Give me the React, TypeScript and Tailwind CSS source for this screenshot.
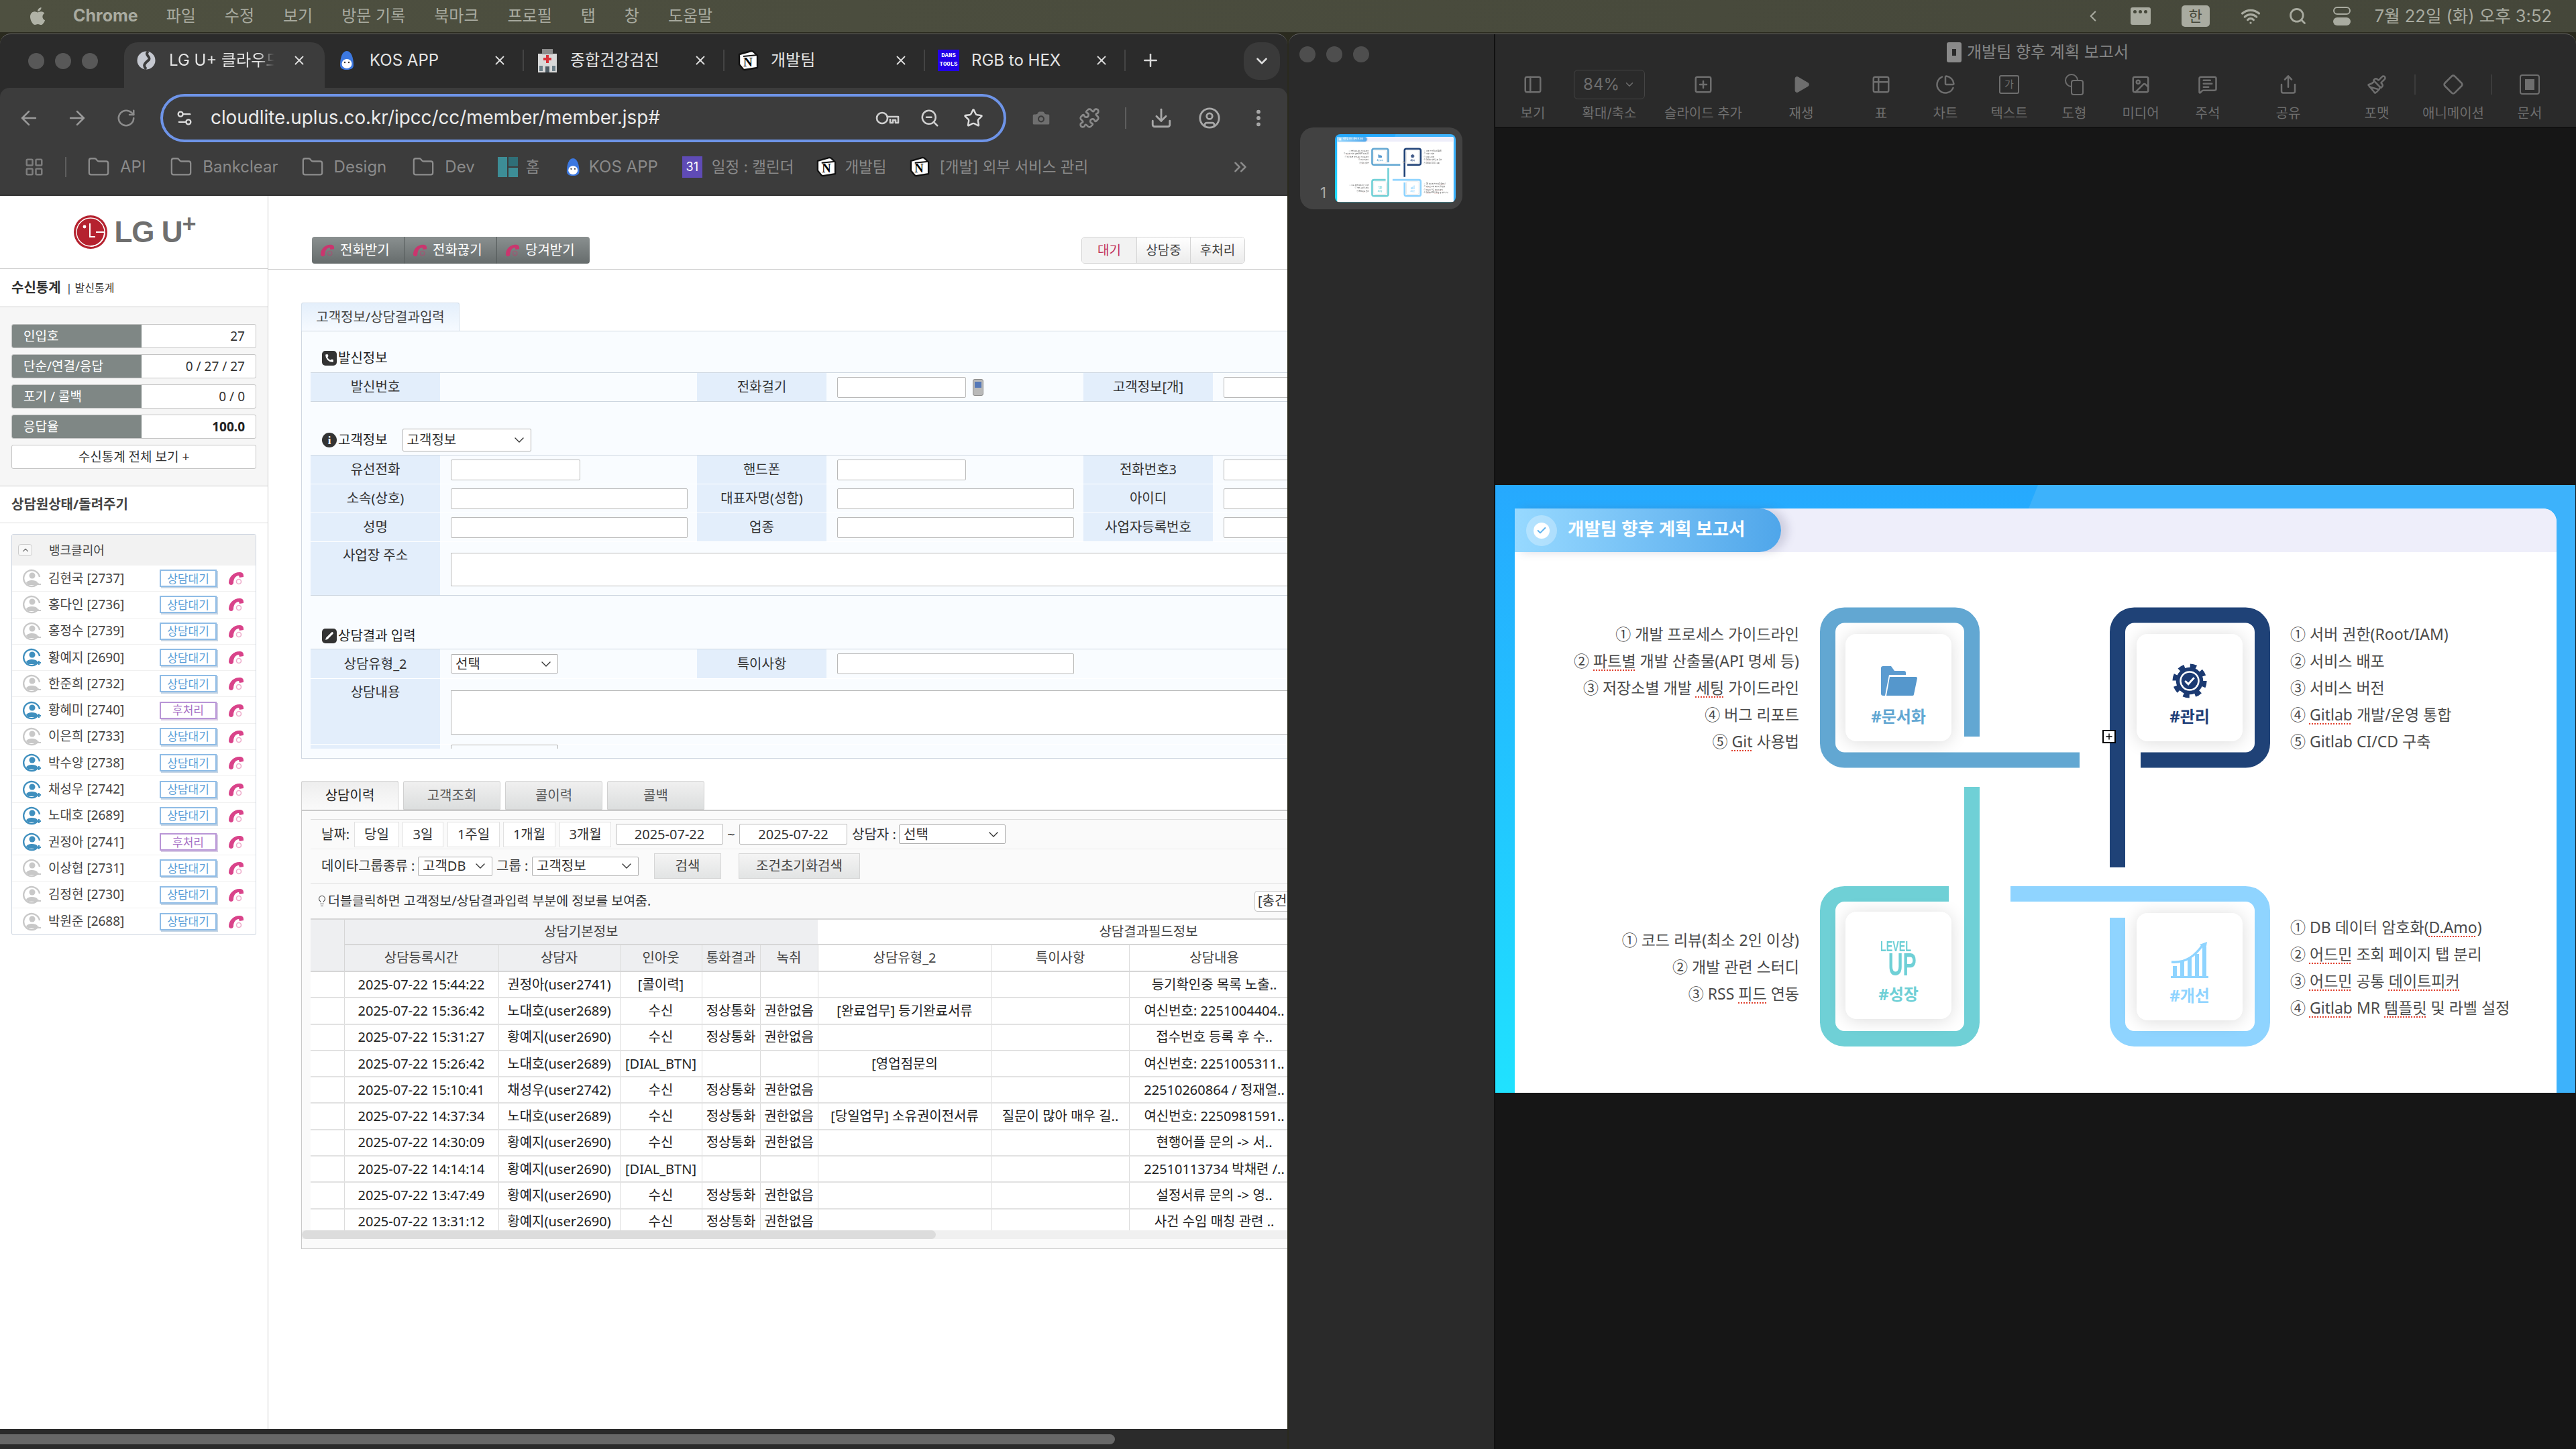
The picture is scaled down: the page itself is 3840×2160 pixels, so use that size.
import React from 'react';
import {
  ArrowLeft, ArrowRight, RotateCw, Settings2, ZoomOut, Star, Camera, Puzzle, Download, CircleUser,
  EllipsisVertical, ChevronDown, ChevronUp, Plus, X, LayoutGrid, Folder, ChevronsRight, ChevronLeft, Wifi, Search,
  PanelLeft, SquarePlus, Play, Table2, ChartPie, Image, MessageSquareText, Share, Paintbrush, Diamond, Lightbulb, Check,
  Phone, Pencil,
} from 'lucide-react';
import { FaApple } from 'react-icons/fa';

const PinkPhone = ({ size = 24, color = '#d9438a' }: { size?: number; color?: string }) => (
  <svg viewBox="0 0 24 24" width={size} height={size}>
    <path d="M1 19C1 10 8 3 17 3c3 0 6 1 6 5v2l-6 1-1-3c-5 0-8 5-8 11-1 4-6 4-7 0z" fill={color} />
    <circle cx="16" cy="17" r="3.5" fill="none" stroke={color} strokeOpacity="0.45" strokeWidth="1.6" />
  </svg>
);

const Avatar = ({ online }: { online: boolean }) => {
  const c = online ? '#3f8fbe' : '#c8c8c8';
  return (
    <svg viewBox="0 0 28 28" width="28" height="28" className="shrink-0">
      <path d="M23 21A12 12 0 1 1 25 12" fill="none" stroke={c} strokeWidth="2.4" />
      <circle cx="14" cy="10" r="4.5" fill={c} />
      <path d="M5 21c2-5 14-5 17-1l-2 4H8z" fill={c} />
      {online ? <path d="M21 22h6M24 19v6" stroke={c} strokeWidth="2" /> : <path d="M20 23h7" stroke={c} strokeWidth="2" />}
    </svg>
  );
};

const Notion = ({ size = 32 }: { size?: number }) => (
  <div className="relative flex shrink-0 items-center justify-center" style={{ width: size, height: size }}>
    <svg viewBox="0 0 32 32" width={size} height={size} className="absolute left-0 top-0">
      <path d="M3 7 21 2q2 0 4 2l5 5v18l-19 3q-2 0-3-2l-5-6z" fill="#fff" stroke="#111" strokeWidth="2.4" strokeLinejoin="round" />
      <path d="M9 10 30 8" stroke="#111" strokeWidth="2" />
    </svg>
    <span className="relative mt-[5px] font-['Liberation_Serif',serif] font-bold leading-none text-black" style={{ fontSize: size * 0.6 }}>N</span>
  </div>
);

const KosIcon = ({ size = 30 }: { size?: number }) => (
  <svg viewBox="0 0 24 30" width={size * 0.8} height={size} className="shrink-0">
    <path d="M12 1C5 1 2 12 2 22c0 5 4 7 10 7s10-2 10-7C22 12 19 1 12 1z" fill="#3c78e0" />
    <ellipse cx="12" cy="20" rx="7.5" ry="7" fill="#fff" />
    <circle cx="9" cy="18" r="1.2" fill="#333" />
    <circle cx="15" cy="18" r="1.2" fill="#333" />
  </svg>
);

const Hospital = () => (
  <svg viewBox="0 0 30 36" width="30" height="36" className="shrink-0">
    <rect x="1" y="8" width="28" height="28" fill="#d9d9d9" />
    <rect x="7" y="1" width="16" height="8" fill="#8c8c8c" />
    <path d="M15 10v12M9 16h12" stroke="#d8323a" strokeWidth="4" />
    <rect x="3" y="26" width="5" height="8" fill="#6d7f88" />
    <rect x="22" y="26" width="5" height="8" fill="#6d7f88" />
    <rect x="12" y="27" width="6" height="9" fill="#4e5a62" />
  </svg>
);

const PassKey = () => (
  <svg viewBox="0 0 36 26" width="36" height="26" fill="none" stroke="#cfcfcf" strokeWidth="2.6">
    <circle cx="10" cy="13" r="8" />
    <path d="M18 11h16v9h-4v-4h-4v4h-4v-6" strokeLinejoin="round" />
  </svg>
);

const Tab = ({ icon, title, active, sep, titleClass }: { icon: React.ReactNode; title: string; active?: boolean; sep?: boolean; titleClass?: string }) => (
  <div className={`flex h-[68px] w-[299px] shrink-0 items-center self-end pb-[14px] pl-[17px] pr-[2px] ${active ? 'rounded-t-[20px] bg-[#3c3c3c]' : ''}`}>
    <div className="flex w-[32px] shrink-0 justify-center">{icon}</div>
    <span className={`ml-[18px] min-w-0 flex-1 overflow-hidden whitespace-nowrap text-[24px] text-[#e4e4e4] ${titleClass ?? ''}`}>{title}</span>
    <X size={22} strokeWidth={2} className="shrink-0 text-[#dedede]" />
    <div className={`ml-[23px] h-[32px] w-[2px] shrink-0 ${sep ? 'bg-[#444444]' : ''}`} />
  </div>
);

const BookFolder = ({ label }: { label: string }) => (
  <div className="flex items-center gap-[15px]">
    <Folder size={34} strokeWidth={1.6} className="text-[#8c8c8c]" />
    <span>{label}</span>
  </div>
);

const ChromeWindow = () => (
  <div className="flex h-full w-[1919px] shrink-0 flex-col overflow-hidden rounded-t-[16px] border-t border-t-[#6a6a6a] bg-[#2b2b2b] font-['Inter','Noto_Sans_CJK_KR',sans-serif]">
    {/* tab strip */}
    <div className="flex h-[80px] shrink-0 items-end pr-[11px]">
      <div className="flex h-[80px] w-[185px] shrink-0 items-center gap-[16px] pl-[42px]">
        <div className="h-[24px] w-[24px] rounded-full bg-[#585858]" />
        <div className="h-[24px] w-[24px] rounded-full bg-[#585858]" />
        <div className="h-[24px] w-[24px] rounded-full bg-[#585858]" />
      </div>
      <Tab active title="LG U+ 클라우드" titleClass="[mask-image:linear-gradient(to_right,black_85%,transparent)] max-w-[158px] mr-[26px]" icon={
        <svg viewBox="0 0 28 28" width="28" height="28">
          <circle cx="14" cy="14" r="13.5" fill="#c5c8d0" />
          <path d="M17 1c-7 5 6 8 0 13s-8 8-3 13" fill="none" stroke="#3c3c3c" strokeWidth="4" />
        </svg>
      } />
      <Tab sep title="KOS APP" icon={<KosIcon />} />
      <Tab sep title="종합건강검진" icon={<Hospital />} />
      <Tab sep title="개발팀" icon={<Notion />} />
      <Tab sep title="RGB to HEX" icon={
        <div className="flex h-[32px] w-[32px] flex-col items-center justify-center bg-[#2300e8] font-['Liberation_Mono',monospace] text-[9px] font-bold leading-[13px] text-white">
          <span>DANS</span><span>TOOLS</span>
        </div>
      } />
      <Plus size={30} strokeWidth={2} className="mb-[26px] ml-[20px] text-[#d8d8d8]" />
      <div className="mb-[12px] ml-auto flex h-[56px] w-[54px] items-center justify-center rounded-[22px] bg-[#3a3a3a]">
        <ChevronDown size={26} strokeWidth={2.4} className="text-[#dedede]" />
      </div>
    </div>
    {/* toolbar */}
    <div className="flex h-[82px] shrink-0 items-center rounded-tl-[14px] rounded-tr-[14px] bg-[#3c3c3c] pl-[26px] pt-[8px]">
      <ArrowLeft size={34} strokeWidth={1.8} className="text-[#9a9a9a]" />
      <ArrowRight size={34} strokeWidth={1.8} className="ml-[38px] text-[#9a9a9a]" />
      <RotateCw size={30} strokeWidth={2} className="ml-[41px] text-[#8c8c8c]" />
      <div className="ml-[36px] flex h-[72px] w-[1261px] items-center rounded-full border-[4px] border-[#6e94e8] pl-[18px] pr-[30px]">
        <Settings2 size={28} strokeWidth={2} className="text-[#dcdcdc]" />
        <span className="ml-[25px] whitespace-nowrap text-[27.8px] text-[#ebebeb]">cloudlite.uplus.co.kr/ipcc/cc/member/member.jsp#</span>
        <div className="ml-auto"><PassKey /></div>
        <ZoomOut size={30} strokeWidth={2} className="ml-[30px] text-[#cfcfcf]" />
        <Star size={30} strokeWidth={2} className="ml-[35px] text-[#dcdcdc]" />
      </div>
      <Camera size={32} fill="#6f6f6f" strokeWidth={1.6} className="ml-[36px] text-[#3c3c3c]" />
      <Puzzle size={32} strokeWidth={2} className="ml-[40px] text-[#8a8a8a]" />
      <div className="ml-[37px] h-[32px] w-[2px] bg-[#5e5e5e]" />
      <Download size={34} strokeWidth={2} className="ml-[35px] text-[#a8a8a8]" />
      <CircleUser size={34} strokeWidth={2} className="ml-[38px] text-[#a8a8a8]" />
      <EllipsisVertical size={32} strokeWidth={2.4} className="ml-[40px] text-[#a8a8a8]" />
    </div>
    {/* bookmarks */}
    <div className="flex h-[77px] shrink-0 items-center bg-[#3c3c3c] pb-[6px] pl-[36px] text-[24px] text-[#8a8a8a]">
      <LayoutGrid size={30} strokeWidth={2} className="text-[#7d7d7d]" />
      <div className="ml-[31px] mr-[31px] h-[30px] w-[2px] bg-[#5e5e5e]" />
      <BookFolder label="API" />
      <div className="ml-[36px]"><BookFolder label="Bankclear" /></div>
      <div className="ml-[34px]"><BookFolder label="Design" /></div>
      <div className="ml-[38px]"><BookFolder label="Dev" /></div>
      <div className="ml-[34px] grid h-[30px] w-[30px] grid-cols-2 gap-[2px]"><div className="row-span-2 bg-[#3d8d96]" /><div className="bg-[#2f6f78]" /><div className="bg-[#3d8d96]" /></div>
      <span className="ml-[12px] text-[22.5px]">홈</span>
      <div className="ml-[39px]"><KosIcon size={28} /></div>
      <span className="ml-[12px]">KOS APP</span>
      <div className="ml-[36px] flex h-[32px] w-[30px] items-center justify-center bg-[#5f4bb6] text-[18px] text-white">31</div>
      <span className="ml-[14px] text-[22.5px]">일정 : 캘린더</span>
      <div className="ml-[33px]"><Notion size={31} /></div>
      <span className="ml-[12px] text-[22.5px]">개발팀</span>
      <div className="ml-[33px]"><Notion size={31} /></div>
      <span className="ml-[15px] text-[22.5px]">[개발] 외부 서비스 관리</span>
      <ChevronsRight size={30} strokeWidth={2} className="ml-auto mr-[55px] text-[#8a8a8a]" />
    </div>
    <div className="h-[2px] shrink-0 bg-[#333]" />
    <div className="flex min-h-0 flex-1 bg-white font-['Noto_Sans','Noto_Sans_CJK_KR',sans-serif] text-[20px] leading-none text-[#333]">
      <Sidebar />
      <MainArea />
    </div>
    <div className="flex h-[30px] shrink-0 items-center bg-[#2b2b2b]">
      <div className="h-[15px] w-[1662px] rounded-r-full bg-[#686868]" />
    </div>
  </div>
);

const statRows = [
  { label: '인입호', value: '27' },
  { label: '단순/연결/응답', value: '0 / 27 / 27' },
  { label: '포기 / 콜백', value: '0 / 0' },
  { label: '응답율', value: '100.0', bold: true },
];

const agents = [
  { name: '김현국 [2737]', on: false, state: '상담대기' },
  { name: '홍다인 [2736]', on: false, state: '상담대기' },
  { name: '홍정수 [2739]', on: false, state: '상담대기' },
  { name: '황예지 [2690]', on: true, state: '상담대기' },
  { name: '한준희 [2732]', on: false, state: '상담대기' },
  { name: '황혜미 [2740]', on: true, state: '후처리' },
  { name: '이은희 [2733]', on: false, state: '상담대기' },
  { name: '박수양 [2738]', on: true, state: '상담대기' },
  { name: '채성우 [2742]', on: true, state: '상담대기' },
  { name: '노대호 [2689]', on: true, state: '상담대기' },
  { name: '권정아 [2741]', on: true, state: '후처리' },
  { name: '이상협 [2731]', on: false, state: '상담대기' },
  { name: '김정현 [2730]', on: false, state: '상담대기' },
  { name: '박원준 [2688]', on: false, state: '상담대기' },
];

const Sidebar = () => (
  <div className="w-[400px] shrink-0 border-r border-r-[#cccccc]">
    <div className="flex h-[109px] items-center justify-center gap-[10px] border-b border-b-[#cccccc] pl-[4px]">
      <svg viewBox="0 0 50 50" width="50" height="50">
        <circle cx="25" cy="25" r="25" fill="#b5222f" />
        <circle cx="25" cy="25" r="21" fill="none" stroke="#fff" strokeWidth="1.4" />
        <circle cx="16" cy="17" r="2.4" fill="#fff" />
        <path d="M24 12v20h8M46 25H33M25 46a21 21 0 0 0 21-21" fill="none" stroke="#fff" strokeWidth="2" />
      </svg>
      <div className="flex items-start font-['Liberation_Sans',sans-serif] font-bold leading-none text-[#6f6f6f]">
        <span className="text-[44px] tracking-[-1px]">LG U</span>
        <span className="-mt-[8px] text-[36px]">+</span>
      </div>
    </div>
    <div className="flex h-[57px] items-center border-b border-b-[#cccccc] pl-[17px]">
      <span className="text-[20px] font-bold text-[#333]">수신통계</span>
      <span className="ml-[8px] text-[16px] text-[#333]">| 발신통계</span>
    </div>
    <div className="flex h-[267px] flex-col gap-[9px] border-b border-b-[#cccccc] bg-[#f6f6f6] px-[17px] pt-[25px]">
      {statRows.map(r => (
        <div key={r.label} className="flex h-[36px] shrink-0 overflow-hidden rounded-[3px] border border-[#c4c4c4] bg-white">
          <div className="flex w-[193px] items-center bg-[#7f8785] pl-[17px] text-[19px] text-white">{r.label}</div>
          <div className={`flex flex-1 items-center justify-end pr-[16px] text-[19px] ${r.bold ? 'font-bold text-[#222]' : 'text-[#333]'}`}>{r.value}</div>
        </div>
      ))}
      <div className="flex h-[36px] shrink-0 items-center justify-center rounded-[3px] border border-[#c4c4c4] bg-white text-[19px] text-[#333]">수신통계 전체 보기 +</div>
    </div>
    <div className="flex h-[55px] items-center border-b border-b-[#dddddd] pl-[17px] text-[20px] font-bold text-[#444]">상담원상태/돌려주기</div>
    <div className="mx-[17px] mt-[16px] overflow-hidden rounded-[3px] border border-[#cdd5e0]">
      <div className="flex h-[46px] items-center bg-[#f2f2f2] pl-[9px] text-[18px] text-[#444]">
        <div className="flex h-[18px] w-[21px] items-center justify-center rounded-[4px] border border-[#cccccc] bg-[#f8f8f8]">
          <ChevronUp size={14} className="text-[#777]" />
        </div>
        <span className="ml-[25px]">뱅크클리어</span>
      </div>
      {agents.map(a => (
        <div key={a.name} className="flex h-[39.3px] items-center border-b border-b-[#f0f0f0] pl-[16px] last:border-b-0">
          <Avatar online={a.on} />
          <span className="ml-[10px] w-[166px] whitespace-nowrap text-[19px] text-[#444]">{a.name}</span>
          <div className={`flex h-[26px] w-[85px] items-center justify-center border-2 bg-white text-[17px] ${a.state === '후처리' ? 'border-[#b895d6] text-[#a56fc5] shadow-[2px_2px_0_#d8cbe4]' : 'border-[#8fbce6] text-[#5b9fd8] shadow-[2px_2px_0_#c5d5e5]'}`}>{a.state}</div>
          <div className="ml-[17px]"><PinkPhone /></div>
        </div>
      ))}
    </div>
  </div>
);

const inp = 'h-[31px] shrink-0 rounded-[2px] border border-[#b9b9b9] bg-white';

const Label = ({ text, tall }: { text: string; tall?: boolean }) => (
  <div className={`flex w-[193px] shrink-0 justify-center bg-[#e3eefb] text-[20px] text-[#333] ${tall ? 'items-start pt-[10px]' : 'items-center'}`}>{text}</div>
);

const Field = ({ label, w, children }: { label: string; w?: string; children?: React.ReactNode }) => (
  <div className="flex w-[576px] shrink-0">
    <Label text={label} />
    <div className="flex flex-1 items-center pl-[16px]">{children ?? (w ? <div className={`${inp} ${w}`} /> : null)}</div>
  </div>
);

const Sel = ({ text, className }: { text: string; className: string }) => (
  <div className={`flex shrink-0 items-center justify-between rounded-[2px] border border-[#b0b0b0] bg-white pl-[6px] pr-[5px] text-[20px] text-[#333] ${className}`}>
    <span>{text}</span>
    <ChevronDown size={24} strokeWidth={1.4} className="text-[#333]" />
  </div>
);

const Heading = ({ icon, text, round }: { icon: React.ReactNode; text: string; round?: boolean }) => (
  <div className="flex items-center gap-[2px] text-[20px] text-[#222]">
    <div className={`flex h-[22px] w-[22px] items-center justify-center bg-[#333] ${round ? 'rounded-full' : 'rounded-[5px]'}`}>{icon}</div>
    <span>{text}</span>
  </div>
);

const FormPanel = () => (
  <div className="h-[638px] w-[1800px] border-b border-l border-t border-[#d0d8e2] bg-[#f9fcff] px-[13px]">
    <div className="flex h-[61px] items-end pb-[10px] pl-[17px]">
      <Heading icon={<Phone size={14} fill="#fff" strokeWidth={0} />} text="발신정보" />
    </div>
    <div className="flex h-[44px] border-b border-t border-[#cdd6e0]">
      <Field label="발신번호" />
      <Field label="전화걸기">
        <div className={`${inp} w-[192px]`} />
        <div className="ml-[10px] flex h-[25px] w-[16px] flex-col items-center rounded-[3px] border border-[#8a8a8a] bg-[#b9b9b9] pt-[3px]">
          <div className="h-[9px] w-[10px] bg-[#5578b8]" />
        </div>
      </Field>
      <Field label="고객정보[개]" w="w-[192px]" />
    </div>
    <div className="flex h-[79px] items-end pb-[5px] pl-[17px]">
      <div className="flex h-[34px] items-center gap-[22px]">
        <Heading round icon={<span className="font-['Liberation_Serif',serif] text-[17px] font-bold leading-none text-white">i</span>} text="고객정보" />
        <Sel text="고객정보" className="h-[34px] w-[192px]" />
      </div>
    </div>
    <div className="border-b border-t border-[#cdd6e0]">
      <div className="flex h-[43px] border-b border-white">
        <Field label="유선전화" w="w-[193px]" /><Field label="핸드폰" w="w-[192px]" /><Field label="전화번호3" w="w-[192px]" />
      </div>
      <div className="flex h-[43px] border-b border-white">
        <Field label="소속(상호)" w="w-[353px]" /><Field label="대표자명(성함)" w="w-[353px]" /><Field label="아이디" w="w-[192px]" />
      </div>
      <div className="flex h-[43px] border-b border-white">
        <Field label="성명" w="w-[353px]" /><Field label="업종" w="w-[353px]" /><Field label="사업자등록번호" w="w-[192px]" />
      </div>
      <div className="flex h-[79px]">
        <Label text="사업장 주소" tall />
        <div className="flex-1 pl-[16px] pt-[16px]"><div className="h-[50px] w-full border border-[#b9b9b9] bg-white" /></div>
      </div>
    </div>
    <div className="flex h-[79px] items-end pb-[8px] pl-[17px]">
      <Heading icon={<Pencil size={14} fill="#fff" strokeWidth={0} />} text="상담결과 입력" />
    </div>
    <div className="h-[149px] overflow-hidden border-t border-[#cdd6e0]">
      <div className="flex h-[44px] border-b border-white">
        <Field label="상담유형_2"><Sel text="선택" className="h-[29px] w-[160px]" /></Field>
        <Field label="특이사항" w="w-[353px]" />
      </div>
      <div className="flex h-[98px] border-b border-white">
        <Label text="상담내용" tall />
        <div className="flex-1 pl-[16px] pt-[17px]"><div className="h-[66px] w-full border border-[#b9b9b9] bg-white" /></div>
      </div>
      <div className="flex h-[20px]">
        <Label text="" />
        <div className="pl-[16px]"><div className="h-[20px] w-[160px] rounded-[2px] border border-[#b0b0b0]" /></div>
      </div>
    </div>
  </div>
);

const dateBtn = 'flex h-[38px] shrink-0 items-center justify-center border border-[#e2e2e2] bg-white';
const grayBtn = 'flex h-[38px] shrink-0 items-center justify-center border border-[#d6d6d6] bg-gradient-to-b from-[#f4f4f4] to-[#e2e4e4] text-[#444]';

const historyRows = [
  ['2025-07-22 15:44:22', '권정아(user2741)', '[콜이력]', '', '', '', '', '등기확인중 목록 노출..', ''],
  ['2025-07-22 15:36:42', '노대호(user2689)', '수신', '정상통화', '권한없음', '[완료업무] 등기완료서류', '', '여신번호: 2251004404..', ''],
  ['2025-07-22 15:31:27', '황예지(user2690)', '수신', '정상통화', '권한없음', '', '', '접수번호 등록 후 수..', ''],
  ['2025-07-22 15:26:42', '노대호(user2689)', '[DIAL_BTN]', '', '', '[영업점문의', '', '여신번호: 2251005311..', ''],
  ['2025-07-22 15:10:41', '채성우(user2742)', '수신', '정상통화', '권한없음', '', '', '22510260864 / 정재열..', ''],
  ['2025-07-22 14:37:34', '노대호(user2689)', '수신', '정상통화', '권한없음', '[당일업무] 소유권이전서류', '질문이 많아 매우 길..', '여신번호: 2250981591..', ''],
  ['2025-07-22 14:30:09', '황예지(user2690)', '수신', '정상통화', '권한없음', '', '', '현행어플 문의 -> 서..', ''],
  ['2025-07-22 14:14:14', '황예지(user2690)', '[DIAL_BTN]', '', '', '', '', '22510113734 박채련 /..', ''],
  ['2025-07-22 13:47:49', '황예지(user2690)', '수신', '정상통화', '권한없음', '', '', '설정서류 문의 -> 영..', ''],
  ['2025-07-22 13:31:12', '황예지(user2690)', '수신', '정상통화', '권한없음', '', '', '사건 수임 매칭 관련 ..', ''],
];

const HistoryTable = () => (
  <div className="h-[478px] overflow-hidden">
    <table className="w-[1742px] table-fixed border-collapse text-[20px] text-[#222]">
      <colgroup>
        <col className="w-[50px]" /><col className="w-[230px]" /><col className="w-[181px]" /><col className="w-[122px]" />
        <col className="w-[87px]" /><col className="w-[86px]" /><col className="w-[259px]" /><col className="w-[205px]" /><col className="w-[254px]" /><col className="w-[268px]" />
      </colgroup>
      <thead>
        <tr className="h-[38px] border-t-2 border-t-[#d6d6d6] text-[#444]">
          <th rowSpan={2} className="border-b-2 border-r border-[#d6d6d6] bg-[#eeeff1]" />
          <th colSpan={5} className="border-b-2 border-[#d6d6d6] bg-[#eeeff1] font-normal">상담기본정보</th>
          <th colSpan={4} className="border-b-2 border-[#d6d6d6] bg-white font-normal">상담결과필드정보</th>
        </tr>
        <tr className="h-[40px] border-b-2 border-b-[#d6d6d6] text-[#444]">
          {['상담등록시간', '상담자', '인아웃', '통화결과', '녹취'].map(h => (
            <th key={h} className="border-r border-[#dcdcdc] bg-[#eeeff1] font-normal">{h}</th>
          ))}
          {['상담유형_2', '특이사항', '상담내용', ''].map(h => (
            <th key={h} className="border-r border-[#dcdcdc] bg-white font-normal">{h}</th>
          ))}
        </tr>
      </thead>
      <tbody className="bg-white">
        {historyRows.map(row => (
          <tr key={row[0]} className="h-[39.3px] border-b-2 border-b-[#e2e2e2]">
            <td className="border-r border-[#dcdcdc]" />
            {row.map((c, i) => (
              <td key={i} className="overflow-hidden whitespace-nowrap border-r border-[#dcdcdc] text-center">{c}</td>
            ))}
          </tr>
        ))}
        <tr className="h-[20px]">
          {Array.from({ length: 10 }).map((_, i) => <td key={i} className="border-r border-[#dcdcdc]" />)}
        </tr>
      </tbody>
    </table>
  </div>
);

const HistoryPanel = () => (
  <div className="relative h-[655px] w-[1800px] border-b border-l border-t-2 border-[#c9c9c9] bg-[#fafafa] px-[13px] pt-[12px]">
    <div className="border-b border-t border-[#dddddd] text-[20px] text-[#333]">
      <div className="flex h-[44px] items-center border-b border-b-[#eeeeee] pl-[16px]">
        <span className="w-[49px] shrink-0">날짜:</span>
        <div className={`${dateBtn} w-[67px]`}>당일</div>
        <div className={`${dateBtn} ml-[5px] w-[61px]`}>3일</div>
        <div className={`${dateBtn} ml-[6px] w-[78px]`}>1주일</div>
        <div className={`${dateBtn} ml-[5px] w-[78px]`}>1개월</div>
        <div className={`${dateBtn} ml-[6px] w-[77px]`}>3개월</div>
        <div className="ml-[7px] flex h-[31px] w-[160px] shrink-0 items-center justify-center rounded-[2px] border border-[#b9b9b9] bg-white">2025-07-22</div>
        <span className="w-[24px] shrink-0 text-center">~</span>
        <div className="flex h-[31px] w-[161px] shrink-0 items-center justify-center rounded-[2px] border border-[#b9b9b9] bg-white">2025-07-22</div>
        <span className="ml-[7px] w-[70px] shrink-0 whitespace-nowrap">상담자 :</span>
        <Sel text="선택" className="h-[29px] w-[159px]" />
      </div>
      <div className="flex h-[50px] items-center pl-[16px]">
        <span className="w-[144px] shrink-0 whitespace-nowrap">데이타그룹종류 :</span>
        <Sel text="고객DB" className="h-[29px] w-[111px]" />
        <span className="ml-[6px] w-[53px] shrink-0 whitespace-nowrap">그룹 :</span>
        <Sel text="고객정보" className="h-[29px] w-[159px]" />
        <div className={`${grayBtn} ml-[23px] w-[100px]`}>검색</div>
        <div className={`${grayBtn} ml-[26px] w-[181px]`}>조건초기화검색</div>
      </div>
    </div>
    <div className="flex h-[52px] items-center">
      <Lightbulb size={18} strokeWidth={1.6} className="ml-[8px] text-[#555]" />
      <span className="w-[900px] whitespace-nowrap text-[19.5px] text-[#333]">더블클릭하면 고객정보/상담결과입력 부분에 정보를 보여줌.</span>
      <div className="ml-[481px] flex h-[31px] w-[80px] items-center whitespace-nowrap rounded-l-[4px] border border-[#c4c4c4] bg-white pl-[4px]">[총건수</div>
    </div>
    <HistoryTable />
    <div className="absolute left-0 top-[625px] h-[13px] w-full bg-[#f0f0f0]">
      <div className="h-[13px] w-[945px] rounded-full bg-[#dcdcdc]" />
    </div>
  </div>
);

const SideTab = ({ text, active, w }: { text: string; active?: boolean; w: string }) => (
  <div className={`flex h-[43px] items-center justify-center rounded-t-[3px] border border-[#d0d0d0] ${w} ${active ? 'border-b-0 bg-gradient-to-b from-[#eeeeee] to-[#fafafa] text-[#222]' : 'bg-gradient-to-b from-[#f0f0f0] to-[#dcdede] text-[#555]'}`}>{text}</div>
);

const MainArea = () => (
  <div className="min-w-0 flex-1 overflow-hidden">
    <div className="flex h-[110px] items-end justify-between border-b border-b-[#d0d0d0] pb-[8px] pl-[65px] pr-[63px]">
      <div className="flex h-[40px] overflow-hidden rounded-[4px] bg-gradient-to-b from-[#8a9090] to-[#666c6c] text-[20px] text-white">
        {['전화받기', '전화끊기', '당겨받기'].map((t, i) => (
          <div key={t} className={`flex w-[138px] items-center gap-[8px] pl-[12px] ${i < 2 ? 'border-r border-r-[#555b5b]' : ''}`}>
            <PinkPhone size={22} color="#c9366e" />
            <span>{t}</span>
          </div>
        ))}
      </div>
      <div className="flex h-[40px] w-[244px] overflow-hidden rounded-[5px] border border-[#d4d4d4] text-[19px]">
        <div className="flex w-[81px] items-center justify-center bg-[#f2f2f2] text-[#c0305c]">대기</div>
        <div className="flex w-[81px] items-center justify-center border-x border-[#d4d4d4] bg-gradient-to-b from-white to-[#ececec] text-[#444]">상담중</div>
        <div className="flex flex-1 items-center justify-center bg-gradient-to-b from-white to-[#ececec] text-[#444]">후처리</div>
      </div>
    </div>
    <div className="pl-[49px] pt-[49px]">
      <div className="flex h-[42px] w-[236px] items-center justify-center rounded-t-[3px] border-x border-t border-[#d5e0ec] bg-gradient-to-b from-[#e4effb] to-[#f6faff] text-[20px] text-[#444]">고객정보/상담결과입력</div>
      <FormPanel />
      <div className="mt-[33px] flex gap-[7px] text-[20px]">
        <SideTab text="상담이력" active w="w-[145px]" />
        <SideTab text="고객조회" w="w-[145px]" />
        <SideTab text="콜이력" w="w-[145px]" />
        <SideTab text="콜백" w="w-[145px]" />
      </div>
      <HistoryPanel />
    </div>
  </div>
);

const KeyItem = ({ label, w, children }: { label: string; w: string; children: React.ReactNode }) => (
  <div className={`flex shrink-0 flex-col items-center ${w}`}>
    <div className="flex h-[46px] items-center justify-center text-[#6e6e6e]">{children}</div>
    <span className="mt-[8px] whitespace-nowrap text-[20px] leading-[24px] text-[#6e6e6e]">{label}</span>
  </div>
);

const Squig = ({ children }: { children: React.ReactNode }) => (
  <span className="underline decoration-[#e0402e] decoration-dotted decoration-2 underline-offset-4">{children}</span>
);

const ListBlock = ({ className, right, lines }: { className: string; right?: boolean; lines: React.ReactNode[] }) => (
  <div className={`absolute flex flex-col text-[23px] leading-[40px] text-[#4a4a4a] ${right ? 'items-end' : 'items-start'} ${className}`}>
    {lines.map((l, i) => <div key={i} className="whitespace-nowrap">{l}</div>)}
  </div>
);

const Card = ({ className, label, color, children }: { className: string; label: string; color: string; children: React.ReactNode }) => (
  <div className={`absolute flex h-[160px] w-[158px] flex-col items-center rounded-[16px] bg-white pt-[44px] shadow-[0_2px_26px_rgba(0,0,0,0.14)] ${className}`}>
    <div className="flex h-[52px] items-center justify-center">{children}</div>
    <span className={`mt-[12px] text-[24px] font-bold leading-[30px] ${color}`}>{label}</span>
  </div>
);

const Slide = () => (
  <div className="relative h-[906px] w-[1610px] overflow-hidden bg-gradient-to-b from-[#26a9fe] to-[#20e2ff] font-['Noto_Sans','Noto_Sans_CJK_KR',sans-serif]">
    <div className="absolute inset-y-0 right-0 w-[815px] bg-[#3db2fb] [clip-path:polygon(14px_0,100%_0,100%_100%,0_100%,0_35px)]" />
    <div className="absolute bottom-0 left-[29px] top-[35px] w-[1553px] rounded-t-[20px] bg-white">
      <div className="h-[65px] rounded-t-[20px] bg-[#eeeefa]" />
    </div>
    {/* section title */}
    <div className="absolute left-[29px] top-[35px] flex h-[65px] w-[397px] items-center rounded-r-full rounded-tl-[20px] bg-gradient-to-r from-[#97d9ff] to-[#4fa6ea] pl-[17px] shadow-[10px_0_14px_rgba(80,80,120,0.2)]">
      <div className="flex h-[46px] w-[46px] items-center justify-center rounded-full bg-white/30">
        <div className="flex h-[24px] w-[24px] items-center justify-center rounded-full bg-white">
          <Check size={16} strokeWidth={3} className="text-[#5fb3ee]" />
        </div>
      </div>
      <span className="mb-[3px] ml-[16px] whitespace-nowrap text-[26.5px] font-semibold text-white">개발팀 향후 계획 보고서</span>
    </div>
    {/* connector frames */}
    <svg viewBox="2230 722 1610 906" className="absolute left-0 top-0 h-[906px] w-[1610px]" fill="none" strokeWidth="23">
      <path d="M2940.5 1097V941a25 25 0 0 0-25-25H2750.5a25 25 0 0 0-25 25V1107a25 25 0 0 0 25 25H3101" stroke="#62a7d2" />
      <path d="M3192 1132H3348.5a25 25 0 0 0 25-25V941a25 25 0 0 0-25-25H3182.5a25 25 0 0 0-25 25V1292" stroke="#1f4277" />
      <path d="M2906 1331.5H2750.5a25 25 0 0 0-25 25V1522.5a25 25 0 0 0 25 25H2915.5a25 25 0 0 0 25-25V1172" stroke="#6fd0d6" />
      <path d="M2998 1331.5H3348.5a25 25 0 0 1 25 25V1522.5a25 25 0 0 1-25 25H3182.5a25 25 0 0 1-25-25V1367" stroke="#8fd4ff" />
    </svg>
    <Card className="left-[522px] top-[222px]" label="#문서화" color="text-[#62a7d2]">
      <svg viewBox="0 0 56 44" width="56" height="44">
        <path d="M2 3a3 3 0 0 1 3-3h12l5 7h14a3 3 0 0 1 3 3v3H14L8 44H5a3 3 0 0 1-3-3z" fill="#5b9bd0" />
        <path d="M15 16h39a2 2 0 0 1 2 2l-5 24a2 2 0 0 1-2 2H10z" fill="#5597cc" />
      </svg>
    </Card>
    <Card className="left-[956px] top-[222px]" label="#관리" color="text-[#1f3f78]">
      <svg viewBox="0 0 56 56" width="54" height="54">
        <circle cx="28" cy="28" r="22" fill="none" stroke="#1b3a72" strokeWidth="9" strokeDasharray="9 8.3" />
        <circle cx="28" cy="28" r="21" fill="#1b3a72" />
        <circle cx="28" cy="28" r="14" fill="none" stroke="#fff" strokeWidth="2.6" />
        <path d="M21 28l5 5 9-10" fill="none" stroke="#fff" strokeWidth="3" />
      </svg>
    </Card>
    <Card className="left-[522px] top-[636px]" label="#성장" color="text-[#6fd0d6]">
      <div className="flex w-[54px] flex-col font-['Liberation_Sans',sans-serif] font-bold leading-none text-[#6fd0d6]">
        <span className="h-[18px] origin-left scale-x-[0.65] text-[22px] leading-[18px]">LEVEL</span>
        <span className="h-[36px] origin-right scale-x-[0.63] self-end text-[48px] leading-[36px]">UP</span>
      </div>
    </Card>
    <Card className="left-[956px] top-[638px]" label="#개선" color="text-[#8fd4ff]">
      <svg viewBox="0 0 56 54" width="56" height="54" fill="#8fd4ff">
        <rect x="3" y="36" width="6" height="16" /><rect x="14" y="28" width="6" height="24" /><rect x="25" y="24" width="6" height="28" />
        <rect x="36" y="18" width="6" height="34" /><rect x="47" y="8" width="6" height="44" /><rect x="0" y="51" width="56" height="3" />
        <path d="M1 30c22 2 36-10 47-26" fill="none" stroke="#8fd4ff" strokeWidth="3.4" />
        <path d="M43 4l11-4-2 12z" />
      </svg>
    </Card>
    <ListBlock right className="right-[1157px] top-[202px]" lines={[
      '① 개발 프로세스 가이드라인',
      <>② <Squig>파트별</Squig> 개발 산출물(API 명세 등)</>,
      <>③ 저장소별 개발 <Squig>세팅</Squig> 가이드라인</>,
      '④ 버그 리포트',
      <>⑤ <Squig>Git</Squig> 사용법</>,
    ]} />
    <ListBlock className="left-[1185px] top-[202px]" lines={[
      '① 서버 권한(Root/IAM)', '② 서비스 배포', '③ 서비스 버전',
      <>④ <Squig>Gitlab</Squig> 개발/운영 통합</>,
      '⑤ Gitlab CI/CD 구축',
    ]} />
    <ListBlock right className="right-[1157px] top-[658px]" lines={[
      '① 코드 리뷰(최소 2인 이상)', '② 개발 관련 스터디',
      <>③ RSS <Squig>피드</Squig> 연동</>,
    ]} />
    <ListBlock className="left-[1185px] top-[639px]" lines={[
      <>① DB 데이터 암호화(<Squig>D.Amo</Squig>)</>,
      <>② <Squig>어드민</Squig> 조회 페이지 탭 분리</>,
      <>③ <Squig>어드민</Squig> 공통 <Squig>데이트피커</Squig></>,
      <>④ <Squig>Gitlab</Squig> MR <Squig>템플릿</Squig> 및 라벨 설정</>,
    ]} />
    {/* text cursor handle */}
    <div className="absolute left-[905px] top-[365px] flex h-[20px] w-[20px] items-center justify-center border-2 border-black bg-white">
      <Plus size={14} strokeWidth={2.4} className="text-black" />
    </div>
  </div>
);

const keynoteTools = [
  { label: '보기', w: 'w-[112px]', icon: <PanelLeft size={30} strokeWidth={2} /> },
  { label: '확대/축소', w: 'w-[116px]', icon: (
    <div className="flex h-[44px] w-[106px] items-center justify-center gap-[6px] rounded-[6px] border border-[#444] text-[24px]">
      <span>84%</span><ChevronDown size={18} strokeWidth={2} />
    </div>
  ) },
  { label: '슬라이드 추가', w: 'w-[164px]', icon: <SquarePlus size={30} strokeWidth={2} /> },
  { label: '재생', w: 'w-[128px]', icon: <Play size={30} fill="currentColor" strokeWidth={1} /> },
  { label: '표', w: 'w-[110px]', icon: <Table2 size={30} strokeWidth={2} /> },
  { label: '차트', w: 'w-[82px]', icon: <ChartPie size={30} strokeWidth={2} /> },
  { label: '텍스트', w: 'w-[108px]', icon: <div className="flex h-[28px] w-[30px] items-center justify-center rounded-[3px] border-2 border-[#6e6e6e] text-[15px]">가</div> },
  { label: '도형', w: 'w-[86px]', icon: (
    <svg viewBox="0 0 30 32" width="30" height="32" fill="none" stroke="currentColor" strokeWidth="2">
      <circle cx="11" cy="10" r="9" /><rect x="11" y="10" width="17" height="21" rx="3" fill="#2a2a2a" />
    </svg>
  ) },
  { label: '미디어', w: 'w-[112px]', icon: <Image size={30} strokeWidth={2} /> },
  { label: '주석', w: 'w-[88px]', icon: <MessageSquareText size={30} strokeWidth={2} /> },
  { label: '공유', w: 'w-[152px]', icon: <Share size={30} strokeWidth={2} /> },
  { label: '포맷', w: 'w-[112px]', icon: <Paintbrush size={30} strokeWidth={2} /> },
  { label: '애니메이션', w: 'w-[112px]', icon: <Diamond size={32} strokeWidth={2} /> },
  { label: '문서', w: 'w-[112px]', icon: <div className="flex h-[30px] w-[30px] items-center justify-center rounded-[4px] border-2 border-[#6e6e6e]"><div className="h-[16px] w-[14px] bg-[#6e6e6e]" /></div> },
];

const KeynoteWindow = () => (
  <div className="flex h-full min-w-0 flex-1 overflow-hidden rounded-t-[16px] border-t border-t-[#6a6a6a] bg-[#2a2a2a] font-['Inter','Noto_Sans_CJK_KR',sans-serif]">
    <div className="w-[308px] shrink-0 border-r-2 border-r-[#111]">
      <div className="flex h-[56px] items-center gap-[16px] pl-[16px] pt-[3px]">
        <div className="h-[24px] w-[24px] rounded-full bg-[#4e4e4e]" />
        <div className="h-[24px] w-[24px] rounded-full bg-[#4e4e4e]" />
        <div className="h-[24px] w-[24px] rounded-full bg-[#4e4e4e]" />
      </div>
      <div className="ml-[17px] mt-[83px] flex h-[122px] w-[242px] items-end rounded-[20px] bg-[#424242] py-[10px] pl-[30px]">
        <span className="mb-[-2px] w-[22px] text-[22px] text-[#aaaaaa]">1</span>
        <div className="h-[102px] w-[180px] overflow-hidden rounded-[8px]">
          <div className="h-[906px] w-[1610px] origin-top-left scale-[0.1118]"><Slide /></div>
        </div>
      </div>
    </div>
    <div className="flex min-w-0 flex-1 flex-col">
      <div className="h-[140px] shrink-0 border-b-2 border-b-[#111]">
        <div className="flex h-[52px] items-center justify-center pl-[6px] pt-[2px] text-[24px] text-[#858585]">
          <div className="mr-[8px] flex h-[30px] w-[22px] items-center justify-center rounded-[3px] bg-[#8a8a8a]"><div className="h-[10px] w-[6px] bg-[#2a2a2a]" /></div>
          <span>개발팀 향후 계획 보고서</span>
        </div>
        <div className="flex items-start">
          {keynoteTools.map((t, i) => (
            <React.Fragment key={t.label}>
              {i >= 12 && <div className="mt-[8px] h-[30px] w-[2px] shrink-0 bg-[#3c3c3c]" />}
              <KeyItem label={t.label} w={t.w}>{t.icon}</KeyItem>
            </React.Fragment>
          ))}
        </div>
      </div>
      <div className="flex min-h-0 flex-1 flex-col bg-[#161616] pt-[532px]">
        <Slide />
      </div>
    </div>
  </div>
);

export default function App() {
  return (
    <div className="flex h-[2160px] w-[3840px] flex-col overflow-hidden bg-[#2a2a1e]">
      <div className="flex h-[48px] shrink-0 items-center bg-gradient-to-r from-[#4e5040] to-[#45473a] pl-[41px] font-['Inter','Noto_Sans_CJK_KR',sans-serif] text-[24px] text-[#a9aba0]">
        <FaApple size={30} className="text-[#b0b2a6]" />
        <span className="ml-[38px] text-[25px] font-bold">Chrome</span>
        <div className="ml-[42px] flex gap-[43px]">
          {['파일', '수정', '보기', '방문 기록', '북마크', '프로필', '탭', '창', '도움말'].map(m => <span key={m}>{m}</span>)}
        </div>
        <div className="ml-auto flex items-center pr-[36px]">
          <ChevronLeft size={26} strokeWidth={2} />
          <div className="ml-[43px] flex h-[26px] w-[30px] items-start justify-center gap-[3px] rounded-[3px] bg-[#a9aba0] pt-[4px]">
            <div className="h-[5px] w-[5px] rounded-full bg-[#45473a]" />
            <div className="h-[5px] w-[5px] rounded-full bg-[#45473a]" />
            <div className="h-[5px] w-[5px] rounded-full bg-[#45473a]" />
          </div>
          <div className="ml-[46px] flex h-[32px] w-[42px] items-center justify-center rounded-[5px] bg-[#a9aba0] text-[22px] text-[#45473a]">한</div>
          <Wifi size={30} strokeWidth={2.6} className="ml-[46px]" />
          <Search size={28} strokeWidth={2.4} className="ml-[41px]" />
          <div className="ml-[39px] flex h-[32px] w-[26px] flex-col justify-center gap-[4px]">
            <div className="h-[12px] rounded-full border-2 border-[#a9aba0]" />
            <div className="h-[12px] rounded-full bg-[#a9aba0]" />
          </div>
          <span className="ml-[36px] whitespace-nowrap text-[25.5px]">7월 22일 (화) 오후 3:52</span>
        </div>
      </div>
      <div className="flex min-h-0 flex-1 gap-[2px] pt-[2px]">
        <ChromeWindow />
        <KeynoteWindow />
      </div>
    </div>
  );
}
